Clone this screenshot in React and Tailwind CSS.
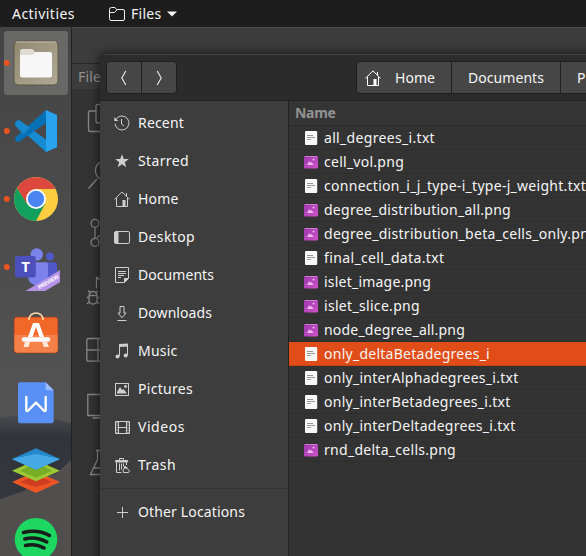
import React, { useLayoutEffect, useRef, useState } from "react";

// Text run that spreads its letters evenly to occupy a given width.
function Label({ text, width, className = "" }) {
  const ref = useRef(null);
  const [spacing, setSpacing] = useState(0);
  useLayoutEffect(() => {
    const natural = ref.current.getBoundingClientRect().width;
    setSpacing((width - natural) / text.length);
  }, []);
  return (
    <span ref={ref} className={`inline-block shrink-0 whitespace-pre ${className}`} style={{ letterSpacing: spacing }}>
      {text}
    </span>
  );
}

const Glyph = ({ children, className = "text-[#cfcfcf]" }) => (
  <svg width="16" height="16" viewBox="0 0 16 16" fill="none" stroke="currentColor" strokeWidth="1" className={`block shrink-0 ${className}`}>
    {children}
  </svg>
);

const HomeShape = () => (
  <>
    <path d="M.5 8.3 8 .9l7.500 7.400M2.500 7v8.500h11V7M12.500 2v3" />
    <path d="M8.500 9h3v6.500h-3z" fill="currentColor" stroke="none" />
  </>
);

const icons = {
  recent: (
    <>
      <path d="M2.200 4A7 7 0 1 1 1 8.800" />
      <path d="M.3 2v4h4z" fill="currentColor" stroke="none" />
      <path d="M7.500 4v5l2.500 2" />
    </>
  ),
  starred: <path d="M8 1.200 9.800 6h5l-4 3.200 1.500 5L8 11.300l-4.300 2.900 1.500-5L1.200 6h5z" fill="currentColor" stroke="none" />,
  home: <HomeShape />,
  desktop: (
    <>
      <rect x=".5" y="2.500" width="15" height="12" rx="1.500" />
      <path d="M1 3h3v11H1z" fill="currentColor" />
    </>
  ),
  documents: (
    <>
      <path d="M1.500.5h13v11l-4 4h-9z" />
      <path d="M4 4.500h8M4 6.500h8M4 8.500h6M4 10.500h3" />
      <path d="M10 15.500V11h5z" fill="currentColor" stroke="none" />
    </>
  ),
  downloads: (
    <>
      <path d="M6 1.500h4V8h2L8 12.800 4 8h2z" />
      <path d="M3.500 15.500h9" />
    </>
  ),
  music: (
    <>
      <path d="M5.500 13V1.500h8V12" />
      <path d="M5 1 14 .5v3L5 4z" fill="currentColor" stroke="none" />
      <circle cx="3.500" cy="13.500" r="2" fill="currentColor" stroke="none" />
      <circle cx="11.700" cy="12.500" r="2" fill="currentColor" stroke="none" />
    </>
  ),
  pictures: (
    <>
      <rect x="1.500" y="2.500" width="13" height="12" />
      <path d="M3 12.500V11l3-5 2 3 1.500-1 3.500 4.500z" fill="currentColor" stroke="none" />
      <circle cx="11.500" cy="5.500" r="1.400" fill="currentColor" stroke="none" />
    </>
  ),
  videos: (
    <>
      <path d="M1.500 2.500h14v12h-14zM4.500 2.500v12M12.500 2.500v12M4 8.500h8" />
      <path d="M3 3v11M14 3v11" strokeDasharray="1.500 1" />
    </>
  ),
  trash: (
    <>
      <path d="M1.500 4.500V3.500h4.500M5.500 3.500v-2h4v2h4l.5 1z" />
      <path d="M1.500 4.500h12" strokeWidth="2" />
      <path d="M2.500 5v10.500h5M5.500 6.500v7M7.500 6.500v6M9.500 6.500v3M12.500 5v3" />
      <path d="m9 13 2.500-3.500L15.500 14l-1 1.500H9.500z" />
      <path d="m10 10 3 1" strokeWidth="2" />
    </>
  ),
  other: <path d="M8.500 3v11M3 8.500h11" />,
};

const places = [
  ["recent", "Recent", 46],
  ["starred", "Starred", 51],
  ["home", "Home", 40.5],
  ["desktop", "Desktop", 57],
  ["documents", "Documents", 76],
  ["downloads", "Downloads", 74],
  ["music", "Music", 39.5],
  ["pictures", "Pictures", 55],
  ["videos", "Videos", 47],
  ["trash", "Trash", 38],
];

const files = [
  ["all_degrees_i.txt", 111],
  ["cell_vol.png", 80],
  ["connection_i_j_type-i_type-j_weight.txt", 262],
  ["degree_distribution_all.png", 187],
  ["degree_distribution_beta_cells_only.png", 274],
  ["final_cell_data.txt", 120.5],
  ["islet_image.png", 107],
  ["islet_slice.png", 96],
  ["node_degree_all.png", 141],
  ["only_deltaBetadegrees_i", 166],
  ["only_interAlphadegrees_i.txt", 194.5],
  ["only_interBetadegrees_i.txt", 186.5],
  ["only_interDeltadegrees_i.txt", 191.5],
  ["rnd_delta_cells.png", 132],
];

function FileIcon({ image }) {
  return image ? (
    <svg width="16" height="16" viewBox="0 0 16 16" className="block shrink-0">
      <defs>
        <linearGradient id="photo" x1="0" y1="0" x2="1" y2="1">
          <stop stopColor="#9c36ae" />
          <stop offset="1" stopColor="#cf54c5" />
        </linearGradient>
      </defs>
      <rect x="1" y="2" width="14" height="12.500" rx="1.300" fill="url(#photo)" />
      <path d="M2 2.500h12" stroke="#cf7bd7" />
      <path d="m4 11 2.300-4 1.500 2 1-1L10.500 11z" fill="#efb6e8" />
      <circle cx="10.500" cy="5.500" r="1" fill="#efb6e8" />
    </svg>
  ) : (
    <svg width="16" height="16" viewBox="0 0 16 16" className="block shrink-0">
      <rect x="2" y="1" width="12.200" height="14" rx="1" fill="#f8f8f8" />
      <path d="M4 5.500h6M4 7.500h8M4 9.500h4" stroke="#999" />
    </svg>
  );
}

const dockArt = [
  <g key="files">
    <defs>
      <linearGradient id="tan" x1="0" y1="0" x2="1" y2="1">
        <stop stopColor="#91886f" />
        <stop offset="1" stopColor="#b0a994" />
      </linearGradient>
    </defs>
    <rect x="4" y="2" width="64" height="64" rx="3" fill="#686866" />
    <rect x="14" y="12" width="44" height="44" rx="4" fill="url(#tan)" stroke="#5b5647" />
    <path d="M16 13h40" stroke="#c2bca9" />
    <path d="M20 22.500q0-2.500 2.500-2.500h9q1 0 1.700.7L36 24v4H20z" fill="#dfdbd0" />
    <path d="M20 26h12.500l3-3H50q2 0 2 2v21.500q0 2-2 2H22q-2 0-2-2z" fill="#f7f7f7" />
  </g>,
  <g key="code">
    <path d="m19 23 29 21v10l-2 1-30.500-27.500q-1-1 0-2z" fill="#168bd2" />
    <path d="M46 13v13L19 44.700q-1.200.8-2 0l-1.700-2q-1-1.200 0-2.200z" fill="#0871b6" />
    <path d="m19 23 11 8-6.500 6.200L15.500 29q-1.500-1.800 0-3.300l1.500-2q1-1.200 2-.7z" fill="#1688cf" />
    <path d="m46 13 11 5v32.300L46 55z" fill="#28a3ee" />
  </g>,
  <g key="chrome">
    <circle cx="36" cy="34" r="22" fill="#ffcd40" />
    <path d="M17 23A22 22 0 0 1 55.500 24H36L27 40z" fill="#dc483d" />
    <path d="M17 23A22 22 0 0 0 36 56l9-17H27z" fill="#11a05e" />
    <circle cx="36" cy="34" r="10" fill="#fff" />
    <circle cx="36" cy="34" r="8.200" fill="#4b85f2" />
  </g>,
  <g key="teams">
    <circle cx="50" cy="23.500" r="4" fill="#5059c9" />
    <path d="M46 29.300h9q2 0 2 2V43q-3 7-11 7z" fill="#5059c9" />
    <circle cx="36.700" cy="21.500" r="6.200" fill="#7b83eb" />
    <path d="M28 29.300h18q2 0 2 2V42q-1 10-10 11-9-1-10-9z" fill="#7b83eb" />
    <rect x="15" y="23" width="20.800" height="21.500" rx="2" fill="#4c50bd" />
    <text x="25.500" y="39" textAnchor="middle" fontSize="15" fontWeight="700" fill="#fff" className="font-['Open_Sans',sans-serif]">T</text>
    <path d="M60 37v12.300L45 58H25.700z" fill="#b693e8" />
    <text transform="translate(39.500 56.500) rotate(-31)" fontSize="5.500" fontWeight="700" fill="#fff" textLength="23" className="font-['Open_Sans',sans-serif]">PREVIEW</text>
  </g>,
  <g key="software">
    <rect x="14" y="16" width="44" height="36" rx="3" fill="#f16829" stroke="#853e23" strokeWidth=".7" />
    <path d="M14.500 34h43v15q0 2.500-2.500 2.500H17q-2.500 0-2.500-2.500z" fill="#f5814a" />
    <path d="M29 19c0-9.500 14-9.500 14 0" fill="none" stroke="#ffdcae" strokeWidth="1.500" />
    <path d="m33 22h6l5 14h-4.500L36 26l-3.500 10H28z" fill="#fff" />
    <path d="M24 38.500h24" stroke="#fff" strokeWidth="4.500" strokeLinecap="round" />
    <path d="m25 41h5l-1.500 5h-5zM42 41h5l2 5h-5z" fill="#ffe6da" />
  </g>,
  <g key="writer">
    <path d="M20 13.300h25.700l8 8v31q0 2-2 2H20q-2 0-2-2v-37q0-2 2-2z" fill="#5890f5" />
    <path d="M45.700 13.300v6q0 2 2 2h6z" fill="#9abdff" />
    <path d="M26.300 28v13.500q1 1 2 0l7.700-8 7.700 8q1 1 2 0V28" fill="none" stroke="#fff" strokeWidth="2.400" strokeLinecap="round" strokeLinejoin="round" />
  </g>,
  <g key="layers">
    <path d="m12 45 24-10.500L60 45 36 56z" fill="#ec5625" />
    <path d="m20 45 16-7 16 7-16 5z" fill="#ce3d1f" />
    <path d="m12 33.700 24-10.500 24 10.500-24 10.500z" fill="#9bc834" />
    <path d="m20 33.700 16-8 16 8-16 7z" fill="#78ac25" />
    <path d="m12 22 24-10.700L60 22 36 32.700z" fill="#2588cc" />
    <path d="m12 22 24-5 24 5-24 10.700z" fill="#44a9e4" />
  </g>,
  <g key="music">
    <circle cx="36" cy="34.300" r="21.300" fill="#1ed760" />
    <path d="M23.500 27.500q14-3.500 26 3M24.800 34q11-3 22 3M25.500 40.500q10-2.500 18.500 2.500" fill="none" stroke="#171e1a" strokeWidth="3.500" strokeLinecap="round" />
  </g>,
];

const activityArt = [
  <path key="copy" d="M28 15.300h-2q-2 0-2 2V32q0 2 2 2h2M23.500 22H18q-1.500 0-1.500 1.500v17q0 2 2 2H28" />,
  <path key="search" d="M28 15.500q-5 3-4.500 9 .5 5 4.500 7M16.500 41.500 25 32" />,
  <g key="branch"><circle cx="23" cy="18.300" r="4" /><circle cx="23" cy="37.300" r="4" /><path d="M23 22.300v11M25 33l3-3" /></g>,
  <path key="debug" d="M24.500 14v11.500M28 17l-3.500-3M17 33q0-4.500 4-4.500t4 4.500v4q0 4-4 4t-4-4zM17 32.500h8M16 27.500l2.500 2.500M14.700 34.500H17M15 41l2.500-2.500M26 28l-2.500 2M25 34.500h2.500M27 41l-2.500-2.500" />,
  <path key="boxes" d="M28 17.500H17q-2.200 0-2.200 2.200V38q0 2.200 2.200 2.200h11M15 29h13M26 17.500v22.700" />,
  <path key="remote" d="M28 15.500H15.800v21H28M20.700 39h7.300" />,
  <path key="flask" d="M24 13.500h4M25.500 13.500v9L18.500 37.500H28M21.500 31h6.500" />,
];

export default function App() {
  return (
    <div className="flex h-[556px] w-[586px] flex-col overflow-hidden bg-[#343434] font-['Noto_Sans',sans-serif] text-[14px] leading-none text-[#f5f5f5]">
      <header className="flex h-[27px] shrink-0 items-center bg-[#1d1d1d] pl-3">
        <Label text="Activities" width={63} />
        <svg className="ml-[34px]" width="16" height="16" viewBox="0 0 16 16" fill="none" stroke="#f2f2f2">
          <path d="M.5 12.500v-9q0-2 2-2H6l1.500 2H14q1.500 0 1.500 1.500v8q0 1.500-1.500 1.500H2q-1.500 0-1.500-2zM1 6.500h4.500L8 3.800" />
        </svg>
        <Label text="Files" width={30.5} className="ml-[6px]" />
        <svg className="ml-[5px]" width="10" height="6" viewBox="0 0 10 6" fill="#f5f5f5"><path d="M0 .5h10L5 5.500z" /></svg>
      </header>
      <div className="relative flex min-h-0 flex-1">
        <nav className="relative flex w-[72px] shrink-0 flex-col overflow-hidden border-r border-[#222] bg-linear-to-b from-[#444] to-[#595959] pt-[2px]">
          <svg className="absolute left-0 top-[385px]" width="71" height="144" viewBox="0 0 71 144">
            <defs>
              <linearGradient id="night" x1="0" y1="0" x2="0" y2="1"><stop stopColor="#484a4d" /><stop offset=".15" stopColor="#31353b" /><stop offset="1" stopColor="#363a40" /></linearGradient>
            </defs>
            <path d="M0 5q35-4 71 6v133H0z" fill="url(#night)" />
            <path d="M71 48 56 62l-17 4-15 13-24 8v57h71z" fill="#504f4e" />
          </svg>
          {dockArt.map((art, i) => (
            <svg key={i} className="relative block shrink-0" width="72" height="68" viewBox="0 0 72 68">
              {art}
              {i < 4 && <circle cx="6.800" cy="34" r="2.900" fill="#e95420" />}
            </svg>
          ))}
        </nav>
        <section className="flex flex-1 flex-col bg-[#333]">
          <div className="h-[36px] shrink-0 border-t border-[#4d4d4d] bg-[#3c3c3c]" />
          <div className="flex h-[26px] shrink-0 items-center border-t border-[#292929] bg-[#3c3c3c] pl-[6px] text-[#929292]">
            <Label text="Files" width={30} />
          </div>
          {activityArt.map((art, i) => (
            <svg key={i} className="block shrink-0" width="28" height="58" viewBox="0 0 28 58" fill="none" stroke="#858585" strokeWidth="1.300">
              {art}
            </svg>
          ))}
        </section>
        <main className="absolute left-[100px] top-[27px] flex h-[510px] w-[500px] flex-col overflow-hidden rounded-tl-[7px] bg-[#333] shadow-[0_0_9px_2px_rgba(0,0,0,0.5)]">
          <div className="flex h-[47px] shrink-0 items-start border-b border-t border-b-[#202020] border-t-[#414141] bg-[#2b2b2b] pl-[6px] pt-[6px]">
            <div className="flex h-[33px] w-[71px] shrink-0 overflow-hidden rounded-[4px] border border-[#202020] bg-[#464646]">
              <div className="flex w-[35px] shrink-0 items-center justify-center border-r border-[#202020]">
                <svg width="8" height="16" viewBox="0 0 8 16" fill="none" stroke="#eee" strokeWidth="1.100"><path d="M5.800 1 1.800 8l4 7" /></svg>
              </div>
              <div className="flex flex-1 items-center justify-center">
                <svg width="8" height="16" viewBox="0 0 8 16" fill="none" stroke="#eee" strokeWidth="1.100"><path d="m2.200 1 4 7-4 7" /></svg>
              </div>
            </div>
            <div className="ml-[179px] flex h-[33px] w-[250px] shrink-0 overflow-hidden rounded-[4px] border border-[#202020] bg-[#464646]">
              <div className="flex w-[95px] shrink-0 items-center border-r border-[#202020] pl-[8px]">
                <Glyph className="text-white"><HomeShape /></Glyph>
                <Label text="Home" width={40} className="ml-[14px]" />
              </div>
              <div className="flex w-[109px] shrink-0 items-center border-r border-[#202020] pl-[16px]">
                <Label text="Documents" width={76} />
              </div>
              <div className="flex items-center pl-[16px]">P</div>
            </div>
          </div>
          <div className="flex min-h-0 flex-1">
            <aside className="flex w-[189px] shrink-0 flex-col border-r border-[#222] bg-[#3d3d3d] pt-[3px]">
              {places.map(([icon, label, width]) => (
                <div key={label} className="flex h-[38px] shrink-0 items-center gap-[8px] pl-[14px]">
                  <Glyph>{icons[icon]}</Glyph>
                  <Label text={label} width={width} />
                </div>
              ))}
              <div className="mb-[4px] mt-[4px] h-px shrink-0 bg-[#333]" />
              <div className="flex h-[38px] shrink-0 items-center gap-[8px] pl-[14px]">
                <Glyph>{icons.other}</Glyph>
                <Label text="Other Locations" width={107} />
              </div>
            </aside>
            <section className="min-w-0 flex-1">
              <div className="flex h-[25px] items-center border-b border-[#2b2b2b] bg-[#353535] pl-[6px] text-[#929292]">
                <Label text="Name" width={40.5} className="font-bold" />
              </div>
              {files.map(([name, width]) => (
                <div
                  key={name}
                  className={`flex h-[24px] items-center gap-[5px] border-b pl-[14px] ${
                    name === "only_deltaBetadegrees_i" ? "border-[#c74415] bg-[#e04d18]" : "border-[#2e2e2e]"
                  }`}
                >
                  <FileIcon image={name.endsWith(".png")} />
                  <Label text={name} width={width} />
                </div>
              ))}
            </section>
          </div>
        </main>
      </div>
    </div>
  );
}
